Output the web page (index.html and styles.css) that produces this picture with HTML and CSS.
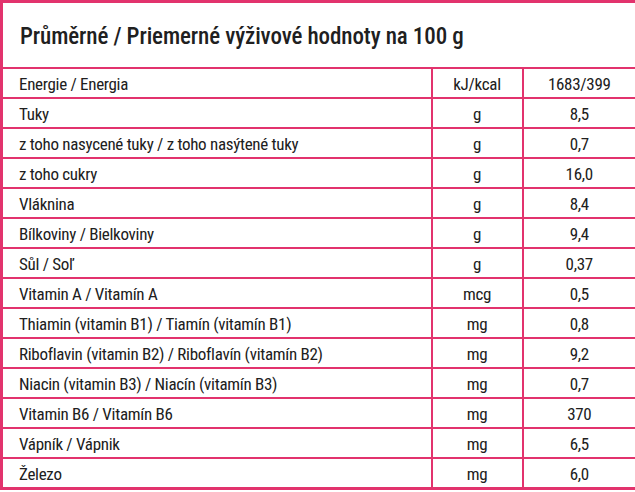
FILE: index.html
```html
<!DOCTYPE html>
<html>
<head>
<meta charset="utf-8">
<link rel="stylesheet" href="styles.css">
</head>
<body>
<table class="nutri">
  <colgroup>
    <col class="c-name">
    <col class="c-unit">
    <col class="c-val">
  </colgroup>
  <thead>
    <tr><th colspan="3" class="title">Průměrné / Priemerné výživové hodnoty na 100 g</th></tr>
  </thead>
  <tbody>
    <tr><td>Energie / Energia</td><td class="u">kJ/kcal</td><td class="v">1683/399</td></tr>
    <tr><td>Tuky</td><td class="u">g</td><td class="v">8,5</td></tr>
    <tr><td>z toho nasycené tuky / z toho nasýtené tuky</td><td class="u">g</td><td class="v">0,7</td></tr>
    <tr><td>z toho cukry</td><td class="u">g</td><td class="v">16,0</td></tr>
    <tr><td>Vláknina</td><td class="u">g</td><td class="v">8,4</td></tr>
    <tr><td>Bílkoviny / Bielkoviny</td><td class="u">g</td><td class="v">9,4</td></tr>
    <tr><td>Sůl / Soľ</td><td class="u">g</td><td class="v">0,37</td></tr>
    <tr><td>Vitamin A / Vitamín A</td><td class="u">mcg</td><td class="v">0,5</td></tr>
    <tr><td>Thiamin (vitamin B1) / Tiamín (vitamín B1)</td><td class="u">mg</td><td class="v">0,8</td></tr>
    <tr><td>Riboflavin (vitamin B2) / Riboflavín (vitamín B2)</td><td class="u">mg</td><td class="v">9,2</td></tr>
    <tr><td>Niacin (vitamin B3) / Niacín (vitamín B3)</td><td class="u">mg</td><td class="v">0,7</td></tr>
    <tr><td>Vitamin B6 / Vitamín B6</td><td class="u">mg</td><td class="v">370</td></tr>
    <tr><td>Vápník / Vápnik</td><td class="u">mg</td><td class="v">6,5</td></tr>
    <tr><td>Železo</td><td class="u">mg</td><td class="v">6,0</td></tr>
  </tbody>
</table>
</body>
</html>
```
FILE: styles.css
```css
html, body {
  margin: 0;
  padding: 0;
  background: #ffffff;
}
.nutri {
  width: 635px;
  border-collapse: collapse;
  table-layout: fixed;
  font-family: "Roboto Condensed", "Liberation Sans", sans-serif;
  color: #202020;
  border: 3px solid #e2336d;
}
.c-name { width: 430px; }
.c-unit { width: 91px; }
.c-val { width: 114px; }
.nutri th, .nutri td {
  border: 2px solid #e2336d;
  padding: 1px 0 0 16px;
  font-size: 17px;
  font-weight: normal;
  letter-spacing: -0.3px;
  height: 27px;
  text-align: left;
  white-space: nowrap;
}
.nutri th.title {
  height: 61px;
  padding-top: 3px;
  font-size: 23px;
  font-weight: 500;
  letter-spacing: -0.1px;
  padding-left: 17px;
}
.nutri td.u, .nutri td.v {
  text-align: center;
  padding: 1px 0 0 0;
}
```
